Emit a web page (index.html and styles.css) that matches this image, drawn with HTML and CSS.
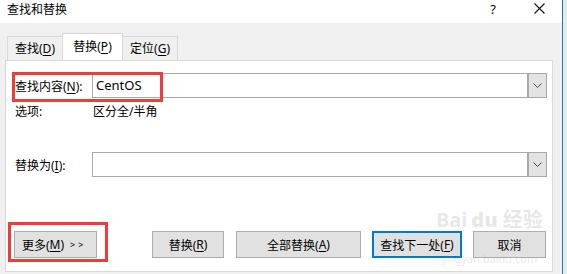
FILE: index.html
```html
<!DOCTYPE html>
<html lang="zh-CN">
<head>
    <meta charset="UTF-8">
    <title>查找和替换</title>
    <link rel="stylesheet" href="styles.css">
</head>
<body>
    <div class="screen">
        <div class="dialog">
            <div class="titlebar">
                <span class="title">查找和替换</span>
                <span class="help">?</span>
                <svg class="close" width="11" height="11" viewBox="0 0 11 11">
                    <path d="M0.5 0.5 L10.5 10.5 M10.5 0.5 L0.5 10.5" stroke="#111" stroke-width="1.1" fill="none"/>
                </svg>
            </div>
            <div class="client">
                <div class="tabs">
                    <div class="tab">查找(<u>D</u>)</div>
                    <div class="tab active">替换(<u>P</u>)</div>
                    <div class="tab">定位(<u>G</u>)</div>
                </div>
                <div class="panel">
                    <div class="row find-row">
                        <label class="label">查找内容(<u>N</u>):</label>
                        <div class="combo">
                            <span class="combo-text">CentOS</span>
                            <span class="combo-btn">
                                <svg width="9" height="5" viewBox="0 0 9 5"><path d="M0.5 0.5 L4.5 4.5 L8.5 0.5" stroke="#444" fill="none"/></svg>
                            </span>
                        </div>
                        <div class="mark mark-find"></div>
                    </div>
                    <div class="row options-row">
                        <span class="label">选项:</span>
                        <span class="option-value">区分全/半角</span>
                    </div>
                    <div class="row replace-row">
                        <label class="label">替换为(<u>I</u>):</label>
                        <div class="combo">
                            <span class="combo-text"></span>
                            <span class="combo-btn">
                                <svg width="9" height="5" viewBox="0 0 9 5"><path d="M0.5 0.5 L4.5 4.5 L8.5 0.5" stroke="#444" fill="none"/></svg>
                            </span>
                        </div>
                    </div>
                    <div class="buttons">
                        <div class="btn btn-more">更多(<u>M</u>) <span class="arrows">&gt;&gt;</span></div>
                        <div class="mark mark-more"></div>
                        <div class="btn btn-replace">替换(<u>R</u>)</div>
                        <div class="btn btn-all">全部替换(<u>A</u>)</div>
                        <div class="btn btn-next">查找下一处(<u>F</u>)</div>
                        <div class="btn btn-cancel">取消</div>
                    </div>
                    <div class="watermark">
                        <span class="wm-logo">Bai<b>du</b> 经验</span>
                        <span class="wm-url">jingyan.baidu.com</span>
                    </div>
                </div>
            </div>
        </div>
        <div class="edge"></div>
    </div>
</body>
</html>
```

FILE: styles.css
```css
body {
    margin: 0;
    font-family: "Noto Sans", "Noto Sans CJK SC", sans-serif;
    font-size: 12px;
    color: #000;
    background: #f0f0f0;
}

u {
    text-decoration: underline;
    text-underline-offset: 2px;
}

.screen {
    display: flex;
    width: 567px;
    height: 274px;
    overflow: hidden;
}

.dialog {
    width: 562px;
    display: flex;
    flex-direction: column;
}

.edge {
    flex: 1;
    border-left: 1px solid #1a7ad8;
    background: #e9e9e9;
}

/* title bar */
.titlebar {
    height: 23px;
    background: #fff;
    display: flex;
    align-items: center;
    padding-left: 7px;
}

.title {
    flex: 1;
    line-height: 18px;
    margin-top: -3px;
}

.help {
    font-size: 13px;
    margin-right: 38px;
    margin-top: -6px;
}

.close {
    margin-right: 17px;
    margin-top: -7px;
}

/* tab area */
.client {
    flex: 1;
    padding: 10px 9px 0 5px;
}

.tabs {
    display: flex;
    align-items: flex-end;
    height: 27px;
    padding-left: 2px;
}

.tab {
    width: 56px;
    height: 24px;
    box-sizing: border-box;
    border: 1px solid #d9d9d9;
    border-bottom: none;
    background: #f0f0f0;
    line-height: 24px;
    text-align: center;
    margin-right: -1px;
    white-space: nowrap;
}

.tab.active {
    width: 61px;
    height: 28px;
    margin-bottom: -1px;
    background: #fff;
    position: relative;
    line-height: 26px;
}

.panel {
    height: 212px;
    box-sizing: border-box;
    background: #fff;
    border: 1px solid #d9d9d9;
    padding: 0 5px 0 9px;
    position: relative;
}

/* rows */
.row {
    display: flex;
    align-items: center;
    position: relative;
}

.label {
    width: 77px;
    flex-shrink: 0;
}

.find-row {
    margin-top: 12px;
}

.options-row {
    margin-top: 3px;
    height: 20px;
}

.option-value {
    margin-left: 1px;
}

.replace-row {
    margin-top: 31px;
}

.combo {
    flex: 1;
    height: 25px;
    box-sizing: border-box;
    border: 1px solid #a9a9a9;
    display: flex;
    align-items: stretch;
}

.combo-text {
    flex: 1;
    padding-left: 3px;
    font-size: 13px;
    line-height: 22px;
}

.combo-btn {
    width: 17px;
    background: #e3e3e3;
    border-left: 2px solid #a9a9a9;
    display: flex;
    align-items: center;
    justify-content: center;
}

/* buttons */
.buttons {
    display: flex;
    margin-top: 54px;
    margin-left: -1px;
    position: relative;
}

.btn {
    height: 27px;
    box-sizing: border-box;
    background: #e1e1e1;
    border: 1px solid #adadad;
    display: flex;
    align-items: center;
    justify-content: center;
    margin-left: 11px;
    white-space: nowrap;
}

.btn-more {
    width: 83px;
    margin-left: 0;
    justify-content: flex-start;
    padding-left: 7px;
}

.arrows {
    font-size: 9px;
    letter-spacing: 3px;
    margin-left: 6px;
}

.btn-replace {
    width: 72px;
    margin-left: 55px;
}

.btn-all {
    width: 125px;
    margin-left: 12px;
}

.btn-next {
    width: 90px;
    border: 2px solid #0078d7;
}

.btn-cancel {
    width: 73px;
}

/* red annotation boxes */
.mark {
    position: absolute;
    border: 3px solid #ee3b3b;
    box-sizing: border-box;
}

.mark-find {
    left: -3px;
    top: -1px;
    width: 151px;
    height: 30px;
}

.mark-more {
    left: -6px;
    top: -9px;
    width: 100px;
    height: 40px;
}

/* faint watermark */
.watermark {
    position: absolute;
    left: 430px;
    top: 145px;
    display: flex;
    flex-direction: column;
    color: rgba(160, 160, 160, 0.25);
    white-space: nowrap;
    pointer-events: none;
}

.wm-logo {
    font-size: 20px;
    font-weight: bold;
    line-height: 28px;
}

.wm-logo b {
    margin-left: 4px;
}

.wm-url {
    font-size: 11px;
    line-height: 12px;
    margin-top: 19px;
    margin-left: 6px;
}
```
